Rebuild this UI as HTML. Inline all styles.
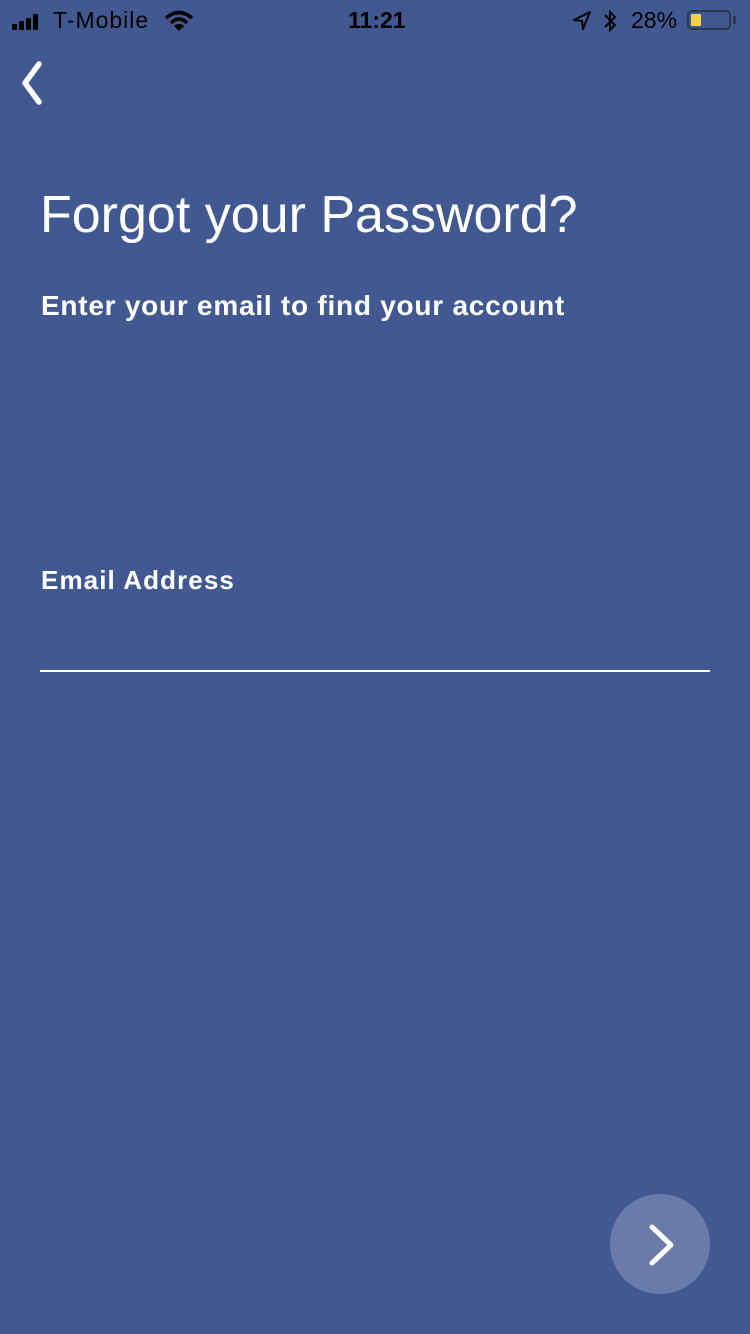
<!DOCTYPE html>
<html><head><meta charset="utf-8"><style>
html,body{margin:0;padding:0}
body{width:750px;height:1334px;background:#425891;position:relative;overflow:hidden;font-family:"Liberation Sans",sans-serif;color:#fff}
.a{position:absolute;white-space:nowrap}
</style></head><body>
<div class="a" style="left:12px;top:14px;">
<svg width="36" height="16"><rect x="0" y="10" width="5" height="6" rx="1" fill="#000"/><rect x="7" y="7" width="5" height="9" rx="1" fill="#000"/><rect x="14" y="4" width="5" height="12" rx="1" fill="#000"/><rect x="21" y="0" width="5" height="16" rx="1" fill="#000"/></svg></div>
<div class="a" style="left:53px;top:7px;font-size:23px;color:#000;letter-spacing:1px">T-Mobile</div>
<svg class="a" style="left:164px;top:10px" width="30" height="22" viewBox="0 0 30 22"><path d="M2 8 Q15 -3 28 8" stroke="#000" stroke-width="3.5" fill="none"/><path d="M7 13 Q15 5 23 13" stroke="#000" stroke-width="3.5" fill="none"/><path d="M15 21 L10 16 Q15 12 20 16Z" fill="#000"/></svg>
<div class="a" style="left:348px;top:7px;font-size:23px;font-weight:bold;color:#000;">11:21</div>
<svg class="a" style="left:572px;top:11px" width="20" height="20"><path d="M18 1 L2 9 L10 10 L11 18Z" fill="none" stroke="#000" stroke-width="2" stroke-linejoin="round"/></svg>
<svg class="a" style="left:602px;top:9px" width="16" height="24"><path d="M3 6 L13 16 L8 21 L8 3 L13 8 L3 18" fill="none" stroke="#000" stroke-width="2"/></svg>
<div class="a" style="left:631px;top:7px;font-size:23px;color:#000;">28%</div>
<div class="a" style="left:687px;top:10px;width:44px;height:20px;border:2px solid #2a3550;border-radius:5px;box-sizing:border-box;"></div>
<div class="a" style="left:691px;top:14px;width:10px;height:12px;background:#f7cf47;border-radius:1px"></div>
<div class="a" style="left:733px;top:16px;width:3px;height:8px;background:#2a3550;border-radius:0 2px 2px 0"></div>
<svg class="a" style="left:10px;top:60px" width="40" height="46"><path d="M29 4 L15 23 L29 42" fill="none" stroke="#fff" stroke-width="5.5" stroke-linecap="round" stroke-linejoin="round"/></svg>
<div class="a" style="left:40px;top:185px;font-size:52px;font-weight:300;letter-spacing:0px;">Forgot your Password?</div>
<div class="a" style="left:41px;top:290px;font-size:28px;font-weight:bold;letter-spacing:0.75px">Enter your email to find your account</div>
<div class="a" style="left:41px;top:565px;font-size:26px;font-weight:bold;letter-spacing:1.1px">Email Address</div>
<div class="a" style="left:40px;top:670px;width:670px;height:2px;background:#fff"></div>
<div class="a" style="left:610px;top:1194px;width:100px;height:100px;border-radius:50%;background:#6a7ba9"></div>
<svg class="a" style="left:640px;top:1220px" width="40" height="50"><path d="M12 7 L31 25 L12 43" fill="none" stroke="#fff" stroke-width="5" stroke-linecap="round" stroke-linejoin="round"/></svg>
</body></html>
